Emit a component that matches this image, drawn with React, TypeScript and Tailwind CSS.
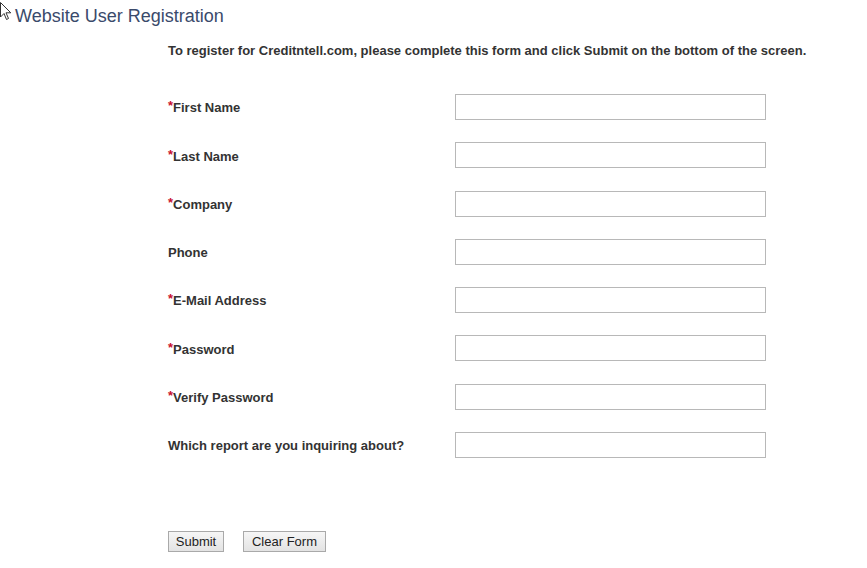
import React from 'react';

const fields: { label: string; required: boolean }[] = [
  { label: 'First Name', required: true },
  { label: 'Last Name', required: true },
  { label: 'Company', required: true },
  { label: 'Phone', required: false },
  { label: 'E-Mail Address', required: true },
  { label: 'Password', required: true },
  { label: 'Verify Password', required: true },
  { label: 'Which report are you inquiring about?', required: false },
];

function Cursor() {
  return (
    <svg className="absolute left-0 top-[2px]" width="12" height="20" viewBox="0 0 12 20">
      <path d="M0.5 0.5 L0.5 15 L4 11.5 L6.5 17.5 L8.5 16.5 L6 10.8 L10.8 10.8 Z" fill="#fff" stroke="#333" strokeWidth="1" strokeLinejoin="round" />
    </svg>
  );
}

export default function App() {
  return (
    <div className="relative min-h-screen bg-white font-['Liberation_Sans',Arial,sans-serif]">
      <Cursor />
      <h1 className="pl-[15px] pt-[5px] text-[18px] leading-[22px] text-[#3a4a6b]">Website User Registration</h1>

      <div className="pl-[168px]">
        <p className="mt-[16px] text-[13px] leading-[15px] font-bold text-[#333]">
          To register for Creditntell.com, please complete this form and click Submit on the bottom of the screen.
        </p>

        <form className="mt-[36px]" onSubmit={e => e.preventDefault()}>
          <div className="grid grid-cols-[287px_311px] gap-y-[22.3px]">
            {fields.map(f => (
              <React.Fragment key={f.label}>
                <label className="flex items-center pt-[2px] text-[13px] font-bold text-[#333]">
                  {f.required && <span className="text-[#c8102e] -mt-[4px]">*</span>}
                  {f.label}
                </label>
                <input
                  type={f.label.includes('Password') ? 'password' : 'text'}
                  className="h-[26px] w-[311px] border border-[#b8b8b8] bg-white outline-none"
                />
              </React.Fragment>
            ))}
          </div>

          <div className="mt-[73px] flex gap-[19px]">
            <button type="submit" className="h-[21px] w-[56px] border border-[#a9a9a9] bg-gradient-to-b from-[#f6f6f6] to-[#e3e3e3] text-[13px] text-[#222]">
              Submit
            </button>
            <button type="reset" className="h-[21px] w-[83px] border border-[#a9a9a9] bg-gradient-to-b from-[#f6f6f6] to-[#e3e3e3] text-[13px] text-[#222]">
              Clear Form
            </button>
          </div>
        </form>
      </div>
    </div>
  );
}
